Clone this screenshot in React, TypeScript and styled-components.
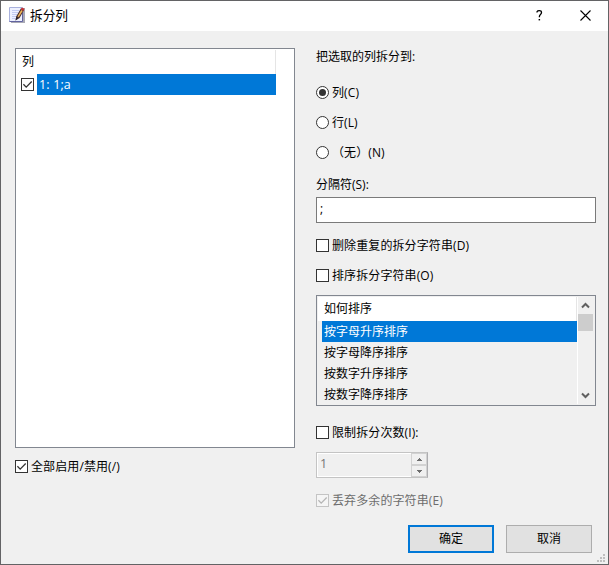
import React from 'react';
import styled, { createGlobalStyle } from 'styled-components';

const GlobalStyle = createGlobalStyle`
  * { box-sizing: border-box; }
  body { margin: 0; background: #f0f0f0; }
`;

const Dialog = styled.div`
  position: relative;
  width: 609px;
  height: 565px;
  display: flex;
  flex-direction: column;
  border: 1px solid #636365;
  background: #f0f0f0;
  color: #000;
  font: 12px/16px 'Open Sans', 'Noto Sans CJK SC', sans-serif;
  white-space: nowrap;
  overflow: hidden;
`;

const TitleBar = styled.header`
  display: flex;
  align-items: center;
  height: 30px;
  flex: none;
  padding: 0 13px 2px 8px;
  background: #fff;
`;

const Title = styled.h1`
  flex: 1;
  margin: 0 0 0 5px;
  font-size: 12.7px;
  font-weight: 400;
  line-height: 18px;
`;

const TitleButton = styled.button`
  display: flex;
  justify-content: center;
  width: 19px;
  margin-left: 27px;
  padding: 0;
  border: 0;
  background: none;
`;

const Columns = styled.main`
  display: grid;
  grid-template-columns: 280px 280px;
  column-gap: 21px;
  padding: 17px 0 0 14px;
  height: 494px;
  flex: none;
`;

const Column = styled.section`
  display: flex;
  flex-direction: column;
`;

const ColumnList = styled.div`
  height: 400px;
  padding: 1px;
  border: 1px solid #828790;
  background: #fff;
`;

const ListHeader = styled.div`
  width: 259px;
  height: 24px;
  padding: 4px 0 0 5px;
  border-right: 1px solid #e5e5e5;
`;

const ListRow = styled.div`
  display: flex;
  align-items: center;
  gap: 3px;
  height: 21px;
  padding-left: 4px;
`;

const SelectedCell = styled.span`
  width: 239px;
  height: 21px;
  padding: 3px 0 0 2px;
  background: #0078d7;
  color: #fff;
  font-size: 12.5px;
  letter-spacing: 0.15px;
`;

const OptionRow = styled.label<{ $top: number; $disabled?: boolean }>`
  display: flex;
  align-items: flex-end;
  flex: none;
  gap: 3px;
  height: 17px;
  margin-top: ${(p) => p.$top}px;
  color: ${(p) => (p.$disabled ? '#6d6d6d' : '#000')};

  & > svg {
    flex: none;
    margin-bottom: 2px;
  }
`;

const OptionText = styled.span`
  height: 16px;
  letter-spacing: 0.1px;
`;

const Caption = styled.div<{ $top: number }>`
  height: 16px;
  margin-top: ${(p) => p.$top}px;
`;

const TextField = styled.input`
  width: 280px;
  height: 26px;
  margin-top: 4px;
  padding: 0 3px 3px;
  border: 1px solid #7a7a7a;
  border-radius: 0;
  background: #fff;
  color: #000;
  font: inherit;
  outline: none;
`;

const SortBox = styled.div`
  display: flex;
  height: 111px;
  margin-top: 11px;
  padding: 1px;
  border: 1px solid #828790;
`;

const SortList = styled.div`
  width: 260px;
  border-right: 1px solid #fff;
`;

const SortHeader = styled.div`
  height: 24px;
  padding: 4px 0 0 6px;
  border-right: 1px solid #e5e5e5;
  background: #fff;
`;

const SortItem = styled.div<{ $selected?: boolean }>`
  height: 21px;
  margin-left: 4px;
  padding: 3px 0 0 2px;
  background: ${(p) => (p.$selected ? '#0078d7' : 'transparent')};
  color: ${(p) => (p.$selected ? '#fff' : '#000')};
`;

const ScrollBar = styled.div`
  display: flex;
  flex-direction: column;
  width: 15px;
`;

const ScrollThumb = styled.div`
  height: 17px;
  background: #cdcdcd;
`;

const ScrollArrow = styled.div`
  display: flex;
  align-items: center;
  justify-content: center;
  height: 17px;
`;

const ScrollTrack = styled.div`
  flex: 1;
`;

const SpinBox = styled.div`
  display: flex;
  justify-content: space-between;
  width: 112px;
  height: 26px;
  margin-top: 11px;
  border: 1px solid #c4c4c4;
  border-right-color: #adadb0;
  box-shadow: inset 1px 1px #fff, inset -1px -1px #fff;
  color: #747474;
  font-size: 12.5px;
  padding: 3px 0 0 3px;
`;

const SpinButtons = styled.div`
  display: flex;
  flex-direction: column;
  width: 16px;
  height: 24px;
  margin-top: -3px;
  background: #f0f0f0;
`;

const SpinButton = styled.div`
  display: flex;
  align-items: center;
  justify-content: center;
  height: 12px;
  border: 1px solid #d2d2d2;
`;

const Footer = styled.footer`
  display: flex;
  gap: 12px;
  justify-content: flex-end;
  padding-right: 16px;
`;

const PushButton = styled.button<{ $primary?: boolean }>`
  width: 86px;
  height: 28px;
  padding: 0;
  border: ${(p) => (p.$primary ? '2px solid #0078d7' : '1px solid #adadad')};
  background: #e1e1e1;
  color: #000;
  font: inherit;
`;

const ResizeGrip = styled.svg`
  position: absolute;
  right: 3px;
  bottom: 2px;
`;

function CheckMark({ checked, disabled }: { checked?: boolean; disabled?: boolean }) {
  const color = disabled ? '#c4c4c4' : '#333';
  return (
    <svg width="13" height="13" viewBox="0 0 13 13">
      <rect x=".5" y=".5" width="12" height="12" fill={disabled ? '#f5f5f5' : '#fff'} stroke={color} />
      {checked && <path d="M2.4 6.3 5.2 9.1 10.7 3.5" fill="none" stroke={disabled ? '#b5b5b5' : color} strokeWidth="1.3" />}
    </svg>
  );
}

function RadioMark({ checked }: { checked?: boolean }) {
  return (
    <svg width="13" height="13" viewBox="0 0 13 13">
      <circle cx="6.5" cy="6.5" r="6" fill="#fff" stroke="#333" />
      {checked && <circle cx="6.5" cy="6.5" r="3.5" fill="#333" />}
    </svg>
  );
}

interface OptionProps {
  top: number;
  kind?: 'check' | 'radio';
  checked?: boolean;
  disabled?: boolean;
  children: React.ReactNode;
}

function Option({ top, kind = 'check', checked, disabled, children }: OptionProps) {
  return (
    <OptionRow $top={top} $disabled={disabled}>
      {kind === 'radio' ? <RadioMark checked={checked} /> : <CheckMark checked={checked} disabled={disabled} />}
      <OptionText>{children}</OptionText>
    </OptionRow>
  );
}

function NotepadIcon() {
  return (
    <svg width="16" height="16" viewBox="0 0 16 16">
      <path d="M2 1h14v15H2z" fill="#a9a9b4" />
      <path d="M.5.5h13v14H.5z" fill="#eef1ff" stroke="#a9b1dd" />
      <path d="M3 3.5h7M3 5.5h6M3 7.5h5M3 9.5h4M3 11.5h4" stroke="#c3cbf2" />
      <path d="M.5 14.5h13v-9" fill="none" stroke="#6264a0" />
      <path d="m6.5 13.5.8-4.3L12 1.2l3.2 1.6L10.6 11z" fill="#4b302c" />
      <path d="m8.5 9.4 3.7-6.3 1.5.8L9.8 10z" fill="#f0b55b" />
      <path d="m11.8 2.6 1.1-2.1 2.6 1.3-1.1 2.1z" fill="#c53235" />
      <path d="m6.5 13.5.9-3.4 1.9 1.1z" fill="#29242b" />
    </svg>
  );
}

function Chevron({ down }: { down?: boolean }) {
  return (
    <svg width="9" height="7" viewBox="0 0 9 7">
      <path d={down ? 'M1 1.5 4.5 5 8 1.5' : 'M1 5.5 4.5 2 8 5.5'} fill="none" stroke="#606060" strokeWidth="2" />
    </svg>
  );
}

function Triangle({ down }: { down?: boolean }) {
  return (
    <svg width="5" height="3" viewBox="0 0 5 3" shapeRendering="crispEdges">
      <path d={down ? 'M0 0h5v1H4v1H3v1H2V2H1V1H0z' : 'M2 0h1v1h1v1h1v1H0V2h1V1h1z'} fill="#6d6d6d" />
    </svg>
  );
}

const sortModes = ['按字母升序排序', '按字母降序排序', '按数字升序排序', '按数字降序排序'];

export default function App() {
  return (
    <>
      <GlobalStyle />
      <Dialog>
        <TitleBar>
          <NotepadIcon />
          <Title>拆分列</Title>
          <TitleButton aria-label="帮助">
            <svg width="7" height="11" viewBox="0 0 7 11">
              <path d="M1 2.5V1.8C1.4 1 2 .7 3.3.7 4.8.7 5.5 1.4 5.5 2.5c0 1.9-2.1 2-2.1 4v.7" fill="none" stroke="#000" strokeWidth="1.3" />
              <path d="M2.6 9h1.5v1.4H2.6z" />
            </svg>
          </TitleButton>
          <TitleButton aria-label="关闭">
            <svg width="11" height="11" viewBox="0 0 11 11">
              <path d="m.5.5 10 10m0-10-10 10" stroke="#000" strokeWidth="1.1" />
            </svg>
          </TitleButton>
        </TitleBar>
        <Columns>
          <Column>
            <ColumnList>
              <ListHeader>列</ListHeader>
              <ListRow>
                <CheckMark checked />
                <SelectedCell>1: 1;a</SelectedCell>
              </ListRow>
            </ColumnList>
            <Option top={10} checked>全部启用/禁用(/)</Option>
          </Column>
          <Column>
            <Caption $top={1}>把选取的列拆分到:</Caption>
            <Option top={19} kind="radio" checked>列(C)</Option>
            <Option top={13} kind="radio">行(L)</Option>
            <Option top={13} kind="radio">（无）(N)</Option>
            <Caption $top={16}>分隔符(S):</Caption>
            <TextField defaultValue=";" />
            <Option top={14}>删除重复的拆分字符串(D)</Option>
            <Option top={13}>排序拆分字符串(O)</Option>
            <SortBox>
              <SortList>
                <SortHeader>如何排序</SortHeader>
                {sortModes.map((mode, i) => (
                  <SortItem key={mode} $selected={i === 0}>{mode}</SortItem>
                ))}
              </SortList>
              <ScrollBar>
                <ScrollArrow><Chevron /></ScrollArrow>
                <ScrollThumb />
                <ScrollTrack />
                <ScrollArrow><Chevron down /></ScrollArrow>
              </ScrollBar>
            </SortBox>
            <Option top={18}>限制拆分次数(I):</Option>
            <SpinBox>
              1
              <SpinButtons>
                <SpinButton><Triangle /></SpinButton>
                <SpinButton><Triangle down /></SpinButton>
              </SpinButtons>
            </SpinBox>
            <Option top={14} checked disabled>丢弃多余的字符串(E)</Option>
          </Column>
        </Columns>
        <Footer>
          <PushButton $primary>确定</PushButton>
          <PushButton>取消</PushButton>
        </Footer>
        <ResizeGrip width="8" height="8" viewBox="0 0 8 8" fill="#bfbfbf" shapeRendering="crispEdges">
          <path d="M6 0h2v2H6zM3 3h2v2H3zM6 3h2v2H6zM0 6h2v2H0zM3 6h2v2H3zM6 6h2v2H6z" />
        </ResizeGrip>
      </Dialog>
    </>
  );
}
